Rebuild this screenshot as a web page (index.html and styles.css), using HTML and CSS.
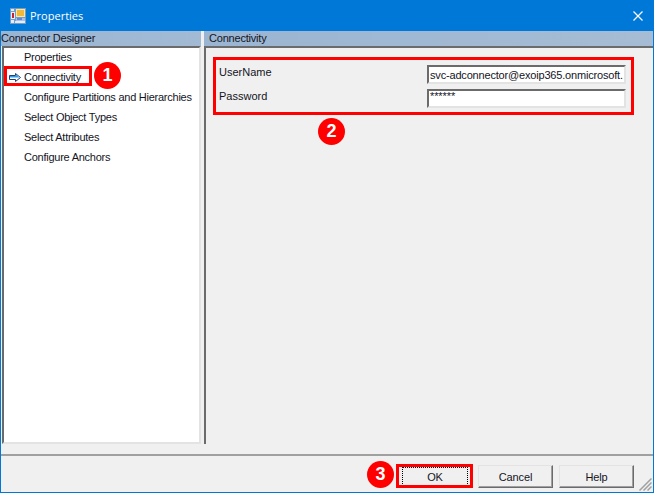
FILE: index.html
```html
<!DOCTYPE html>
<html lang="en">
<head>
<meta charset="utf-8">
<title>Properties</title>
<link rel="stylesheet" href="styles.css">
</head>
<body>
<div class="window">
  <header class="titlebar">
    <svg class="app-icon" width="16" height="16" viewBox="0 0 16 16">
      <rect x="0" y="0" width="16" height="16" fill="#6f9fce"/>
      <rect x="1" y="1" width="3" height="2" fill="#e6ecf2"/>
      <rect x="1" y="12" width="3" height="3" fill="#e6ecf2"/>
      <rect x="5" y="13" width="10" height="2" fill="#e6ecf2"/>
      <rect x="1" y="4" width="4" height="7" fill="#e6ecf2"/>
      <rect x="2" y="5" width="2" height="5" fill="#c9242a"/>
      <rect x="6" y="1" width="9" height="8" fill="#fbe7a0"/>
      <rect x="7" y="2" width="7" height="6" fill="#f0b93a"/>
      <rect x="6" y="10" width="9" height="3" fill="#a9c0ea"/>
      <rect x="7" y="10" width="5" height="2" fill="#5f86dd"/>
    </svg>
    <span class="title">Properties</span>
    <svg class="close" width="10" height="10" viewBox="0 0 10 10"><path d="M0.5 0.5 9.5 9.5M9.5 0.5 0.5 9.5" stroke="#fff" stroke-width="1.2" fill="none"/></svg>
  </header>
  <main class="content">
    <section class="nav-col">
      <div class="strip strip-left">Connector Designer</div>
      <ul class="nav-list">
        <li class="nav-item">Properties</li>
        <li class="nav-item nav-current">
          <svg class="arrow" width="12" height="9" viewBox="0 0 12 9"><path d="M0.5 2.5H6.5V0.5L11.5 4.5 6.5 8.5V6.5H0.5Z" fill="#fff" stroke="#1c3f78"/><path d="M1 3H7V1.6L10.3 4.5H1Z" fill="#2f9ae8"/></svg>
          Connectivity</li>
        <li class="nav-item">Configure Partitions and Hierarchies</li>
        <li class="nav-item">Select Object Types</li>
        <li class="nav-item">Select Attributes</li>
        <li class="nav-item">Configure Anchors</li>
      </ul>
    </section>
    <section class="page-col">
      <div class="strip strip-right">Connectivity</div>
      <div class="page">
        <div class="field"><label class="field-label">UserName</label><div class="input">svc-adconnector@exoip365.onmicrosoft.</div></div>
        <div class="field"><label class="field-label">Password</label><div class="input input-pass">******</div></div>
      </div>
    </section>
  </main>
  <footer class="footer">
    <div class="btn btn-default"><span class="focus">OK</span></div>
    <div class="btn">Cancel</div>
    <div class="btn">Help</div>
    <svg class="grip" width="14" height="14" viewBox="0 0 14 14"><path d="M13.5 1.5 1.5 13.5M13.5 5.5 5.5 13.5M13.5 9.5 9.5 13.5" stroke="#a0a0a0" stroke-width="1.5" fill="none"/></svg>
  </footer>
  <div class="mark mark-1"></div>
  <div class="mark mark-2"></div>
  <div class="mark mark-3"></div>
  <div class="badge badge-1">1</div>
  <div class="badge badge-2">2</div>
  <div class="badge badge-3">3</div>
</div>
</body>
</html>
```
FILE: styles.css
```css
* { box-sizing: border-box; }
html, body { margin: 0; padding: 0; }
body { width: 654px; height: 493px; overflow: hidden; }
.window {
  position: relative; width: 654px; height: 493px;
  display: flex; flex-direction: column;
  background: #f0f0f0; border: 1px solid #0078d7; border-top: 0;
  font: 11px "Liberation Sans", Arial, sans-serif; letter-spacing: -0.1px; color: #14141e;
}
.titlebar {
  height: 31px; flex: none; margin: 0 -1px; padding-left: 10px;
  display: flex; align-items: center;
  background: #0078d7; color: #fff;
}
.app-icon { flex: none; }
.title { margin-left: 4px; font: 11px "Open Sans", sans-serif; letter-spacing: 0; }
.close { margin-left: auto; margin-right: 11px; }
.content { flex: none; height: 425px; display: flex; border-bottom: 2px solid #a0a0a0; }
.nav-col { width: 200px; flex: none; display: flex; flex-direction: column; }
.page-col { flex: 1; margin-left: 3px; display: flex; flex-direction: column; min-width: 0; }
.strip { height: 15px; flex: none; line-height: 14px; white-space: nowrap; letter-spacing: -0.2px; }
.strip-left { background: linear-gradient(90deg, #9ab5d2, #a2bad4); }
.strip-right { background: linear-gradient(90deg, #9ab5d2, #a6bcd4); padding-left: 5px; }
.nav-list {
  list-style: none; margin: 0 0 10px 1px; padding: 0; flex: 1;
  background: #fff; border: 2px solid; border-color: #6b6b6b #e3e3e3 #e3e3e3 #6b6b6b;
}
.nav-item {
  position: relative; height: 20px; line-height: 20px; padding-left: 20px; white-space: nowrap;
  letter-spacing: -0.25px;
  top: -1px;
}
.arrow { position: absolute; left: 5px; top: 6px; }
.page {
  flex: 1; margin-bottom: 10px; padding: 17px 27px 0 13px;
  border-left: 2px solid #6b6b6b; border-top: 2px solid #6b6b6b;
}
.field { display: flex; justify-content: space-between; height: 24px; }
.field-label { line-height: 14px; letter-spacing: 0; }
.input {
  width: 199px; height: 19px; background: #fff; padding-left: 1px; line-height: 16px;
  border: 2px solid; border-color: #6b6b6b #e3e3e3 #e3e3e3 #6b6b6b;
  white-space: nowrap; overflow: hidden; letter-spacing: -0.18px;
}
.input-pass { line-height: 11px; letter-spacing: -0.1px; }
.footer { flex: 1; position: relative; display: flex; padding: 9px 0 0 399px; gap: 6px; }
.btn {
  width: 75px; height: 23px; flex: none;
  display: flex; align-items: center; justify-content: center;
  background: #f0f0f0; border: 1px solid; border-color: #e3e3e3 #6b6b6b #6b6b6b #e3e3e3;
  box-shadow: inset -1px -1px 0 #a0a0a0;
}
.btn-default { width: 70px; margin-right: 2px; padding: 2px; border: 0; box-shadow: none; }
.focus {
  flex: 1; align-self: stretch; display: flex; align-items: center; justify-content: center;
  border: 1px dotted #000;
}
.grip { position: absolute; right: 1px; bottom: 1px; }
.mark { position: absolute; border: 3px solid #f00; pointer-events: none; }
.mark-1 { left: 3px; top: 66px; width: 88px; height: 20px; }
.mark-2 { left: 212px; top: 57px; width: 421px; height: 58px; }
.mark-3 { left: 395px; top: 464px; width: 77px; height: 24px; }
.badge {
  position: absolute; width: 27px; height: 27px; border-radius: 50%;
  background: #f00; color: #fff; text-align: center; letter-spacing: 0;
  font: bold 18px/27px "Liberation Sans", Arial, sans-serif;
}
.badge-1 { left: 93px; top: 62px; }
.badge-2 { left: 317px; top: 118px; }
.badge-3 { left: 366px; top: 461px; }
```
